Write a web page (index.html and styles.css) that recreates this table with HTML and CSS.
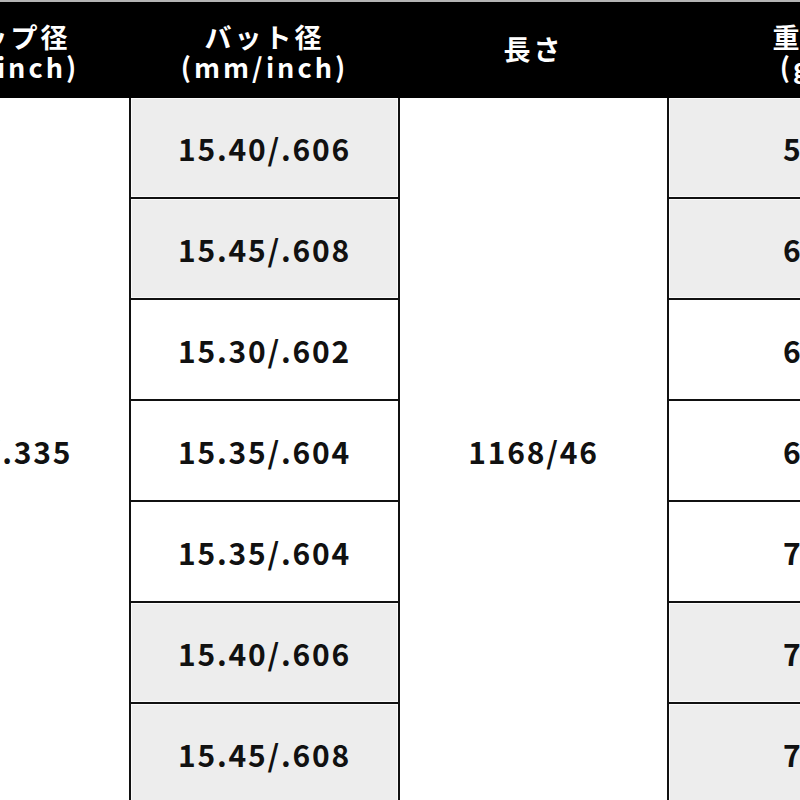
FILE: index.html
```html
<!DOCTYPE html>
<html lang="ja">
<head>
<meta charset="utf-8">
<link rel="stylesheet" href="styles.css">
</head>
<body>
<div class="topline"></div>
<table class="spec">
  <colgroup>
    <col class="c">
    <col class="c">
    <col class="c">
    <col class="c">
  </colgroup>
  <thead>
    <tr>
      <th class="two">グリップ径<br>(mm/inch)</th>
      <th class="two">バット径<br>(mm/inch)</th>
      <th>長さ</th>
      <th class="two">重量<br>(g)</th>
    </tr>
  </thead>
  <tbody>
    <tr>
      <td rowspan="7" class="span">8.50/.335</td>
      <td class="gray">15.40/.606</td>
      <td rowspan="7" class="span">1168/46</td>
      <td class="gray">52</td>
    </tr>
    <tr>
      <td class="gray">15.45/.608</td>
      <td class="gray">61</td>
    </tr>
    <tr>
      <td>15.30/.602</td>
      <td>63</td>
    </tr>
    <tr>
      <td>15.35/.604</td>
      <td>66</td>
    </tr>
    <tr>
      <td>15.35/.604</td>
      <td>71</td>
    </tr>
    <tr>
      <td class="gray">15.40/.606</td>
      <td class="gray">75</td>
    </tr>
    <tr>
      <td class="gray">15.45/.608</td>
      <td class="gray">78</td>
    </tr>
  </tbody>
</table>
</body>
</html>
```

FILE: styles.css
```css
html, body {
  margin: 0;
  padding: 0;
  background: #fff;
}

body {
  overflow: hidden;
}

.topline {
  height: 2px;
  background: #b4b4b4;
}

.spec {
  border-collapse: collapse;
  table-layout: fixed;
  width: 1076px;
  margin-left: -140px;
  font-family: "Noto Sans CJK JP", "Noto Sans", sans-serif;
  font-weight: bold;
  color: #111;
}

.spec .c {
  width: 269px;
}

.spec th {
  background: #000;
  color: #fff;
  height: 88px;
  padding: 3px 0;
  font-size: 27px;
  line-height: 30px;
  letter-spacing: 3px;
  text-align: center;
  vertical-align: middle;
  border: 2px solid #000;
  border-top: none;
}

.spec th.two {
  padding: 6px 0 0;
}

.spec td {
  height: 99px;
  padding: 0;
  font-size: 30px;
  letter-spacing: 1.8px;
  text-align: center;
  vertical-align: middle;
  border: 2px solid #111;
  background: #fff;
}

.spec td.gray {
  background: #ededed;
  box-shadow: inset 0 0 0 1px #fafafa;
}
```
